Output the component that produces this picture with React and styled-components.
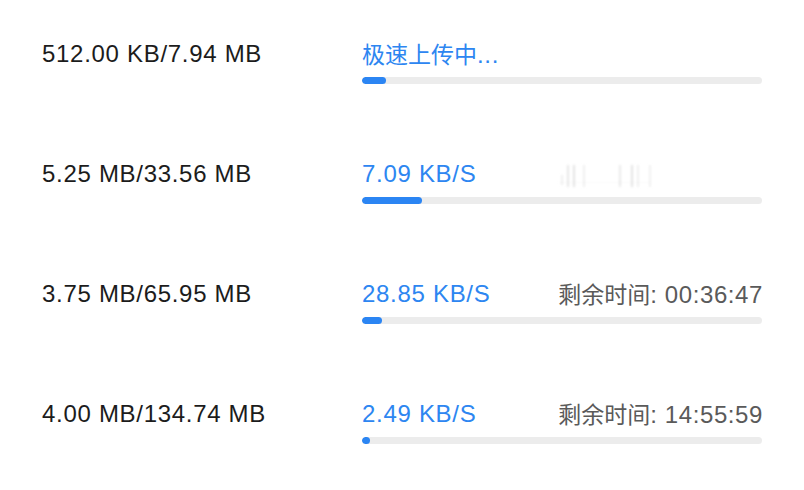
import React from "react";
import styled, { createGlobalStyle } from "styled-components";

const Global = createGlobalStyle`
  html, body { margin: 0; padding: 0; background: #ffffff; }
  body { font-family: "Liberation Sans", Arial, "Noto Sans CJK SC", sans-serif; }
`;

const Page = styled.div`
  width: 804px;
  height: 490px;
  box-sizing: border-box;
  padding: 40px 0 0 42px;
  display: flex;
  flex-direction: column;
  gap: 76px;
  background: #fff;
`;

const Row = styled.div`
  display: grid;
  grid-template-columns: 320px 400px;
  align-items: start;
`;

const Size = styled.div`
  font-size: 24px;
  line-height: 28px;
  letter-spacing: 0.7px;
  color: #1c1c1c;
  white-space: nowrap;
`;

const Progress = styled.div`
  display: flex;
  flex-direction: column;
  gap: 9px;
`;

const InfoLine = styled.div`
  display: flex;
  justify-content: space-between;
  align-items: center;
  height: 28px;
  font-size: 24px;
  line-height: 28px;
  letter-spacing: 0.7px;
  white-space: nowrap;
`;

const Speed = styled.span`
  color: #2d86f1;
`;

const Remaining = styled.span`
  color: #5a5a5a;
  letter-spacing: 0.6px;
  margin-right: -1px;
`;

const Cjk = styled.span`
  font-family: "Noto Sans CJK SC", sans-serif;
  font-size: ${(p) => p.$size || 23}px;
  letter-spacing: 0;
`;

const Track = styled.div`
  height: 7px;
  border-radius: 4px;
  background: #ececec;
  overflow: hidden;
`;

const Fill = styled.div`
  height: 100%;
  border-radius: 4px;
  background: #2b85f3;
`;

const Ghost = styled.svg`
  margin-right: 105px;
  margin-top: 4px;
`;

const GhostMark = () => (
  <Ghost width="100" height="30" viewBox="0 0 100 30">
    <defs>
      <filter id="gb" x="-20%" y="-20%" width="140%" height="140%">
        <feGaussianBlur stdDeviation="1.1" />
      </filter>
    </defs>
    <g filter="url(#gb)" fill="#d6d6d6">
      <rect x="4" y="14" width="2" height="10" opacity="0.4" />
      <rect x="10" y="4" width="2" height="22" opacity="0.55" />
      <rect x="16" y="4" width="2" height="22" opacity="0.65" />
      <rect x="26" y="4" width="2" height="22" opacity="0.4" />
      <rect x="62" y="4" width="2" height="22" opacity="0.5" />
      <rect x="74" y="4" width="2" height="22" opacity="0.65" />
      <rect x="80" y="4" width="2" height="22" opacity="0.4" />
      <rect x="92" y="4" width="2" height="22" opacity="0.35" />
      <rect x="2" y="21" width="90" height="1" opacity="0.15" />
    </g>
  </Ghost>
);

const rows = [
  { size: "512.00 KB/7.94 MB", status: "极速上传中", fill: 24 },
  { size: "5.25 MB/33.56 MB", speed: "7.09 KB/S", ghost: true, fill: 60 },
  { size: "3.75 MB/65.95 MB", speed: "28.85 KB/S", left: "00:36:47", fill: 20 },
  { size: "4.00 MB/134.74 MB", speed: "2.49 KB/S", left: "14:55:59", fill: 8 },
];

export default function App() {
  return (
    <>
      <Global />
      <Page>
        {rows.map((r) => (
          <Row key={r.size}>
            <Size>{r.size}</Size>
            <Progress>
              <InfoLine>
                <Speed>
                  {r.status ? (
                    <>
                      <Cjk $size={23}>{r.status}</Cjk>...
                    </>
                  ) : (
                    r.speed
                  )}
                </Speed>
                {r.left && (
                  <Remaining>
                    <Cjk>剩余时间</Cjk>: {r.left}
                  </Remaining>
                )}
                {r.ghost && <GhostMark />}
              </InfoLine>
              <Track>
                <Fill style={{ width: `${r.fill}px` }} />
              </Track>
            </Progress>
          </Row>
        ))}
      </Page>
    </>
  );
}
